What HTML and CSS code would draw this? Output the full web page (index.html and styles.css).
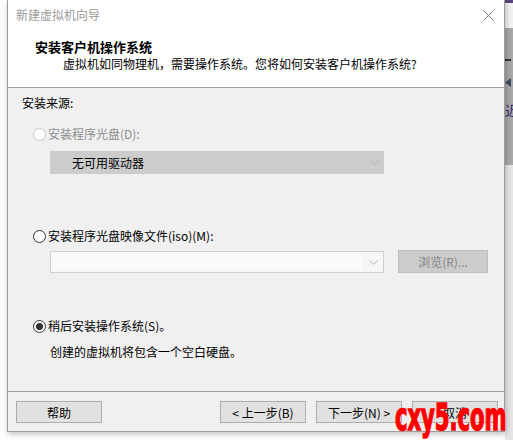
FILE: index.html
```html
<!DOCTYPE html>
<html lang="zh-CN">
  <head>
    <meta charset="UTF-8" />
    <meta name="viewport" content="width=device-width, initial-scale=1.0" />
    <title>新建虚拟机向导</title>
    <link rel="stylesheet" href="styles.css">
  </head>
  <body>
    <div class="desk">
      <div class="window">
        <!-- Title bar -->
        <div class="titlebar">
          <span class="title">新建虚拟机向导</span>
          <svg class="close" width="11" height="11" viewBox="0 0 11 11">
            <path d="M0.5 0.5 L10.5 10.5 M10.5 0.5 L0.5 10.5" stroke="#7a7a7a" stroke-width="1" fill="none" />
          </svg>
        </div>

        <!-- Wizard header -->
        <div class="header">
          <div class="header-title">安装客户机操作系统</div>
          <div class="header-sub">虚拟机如同物理机，需要操作系统。您将如何安装客户机操作系统?</div>
        </div>

        <!-- Install source -->
        <div class="content">
          <div class="group-label">安装来源:</div>

          <div class="option option-disc disabled">
            <span class="radio"></span>安装程序光盘(D):
          </div>
          <div class="select">
            <span>无可用驱动器</span>
            <svg class="chevron" width="9" height="5" viewBox="0 0 9 5">
              <polyline points="0.5,0.5 4.5,4.5 8.5,0.5" stroke="#b4b4b4" fill="none" />
            </svg>
          </div>

          <div class="option option-iso">
            <span class="radio"></span>安装程序光盘映像文件(iso)(M):
          </div>
          <div class="iso-row">
            <div class="combo">
              <div class="combo-field"></div>
              <svg class="chevron" width="9" height="5" viewBox="0 0 9 5">
                <polyline points="0.5,0.5 4.5,4.5 8.5,0.5" stroke="#b4b4b4" fill="none" />
              </svg>
            </div>
            <button class="browse">浏览(R)...</button>
          </div>

          <div class="option option-later">
            <span class="radio checked"></span>稍后安装操作系统(S)。
          </div>
          <p class="note">创建的虚拟机将包含一个空白硬盘。</p>
        </div>

        <!-- Buttons -->
        <div class="footer">
          <button class="btn">帮助</button>
          <div class="nav">
            <button class="btn">&lt; 上一步(B)</button>
            <button class="btn">下一步(N) &gt;</button>
            <button class="btn">取消</button>
          </div>
        </div>
      </div>

      <div class="backdrop">
        <span class="backdrop-top"></span>
        <span class="backdrop-mid">
          <span class="dash"></span>
          <span class="arrow"></span>
          <span class="glyph">近</span>
        </span>
      </div>
    </div>

    <div class="watermark">cxy5.com</div>
  </body>
</html>
```

FILE: styles.css
```css
body {
  margin: 0;
  padding: 0;
  font-family: "Noto Sans CJK SC", "Liberation Sans", sans-serif;
  font-size: 12px;
  color: #000;
  background: #fff;
  overflow: hidden;
}
.desk {
  display: flex;
  width: 513px;
  height: 440px;
  padding-left: 7px;
  box-sizing: border-box;
}
.window {
  width: 498px;
  height: 432px;
  box-sizing: border-box;
  border: 1px solid #9c9c9c;
  border-top: none;
  background: #fff;
  display: flex;
  flex-direction: column;
  box-shadow: 1px 2px 6px rgba(0, 0, 0, 0.25);
  position: relative;
  z-index: 1;
}
.titlebar {
  height: 30px;
  display: flex;
  align-items: center;
  justify-content: space-between;
  padding: 0 10px 0 8px;
}
.title {
  color: #9a9a9a;
  line-height: 16px;
}
.close {
  display: block;
}
.header {
  height: 58px;
  box-sizing: border-box;
  padding-top: 9px;
  border-bottom: 1px solid #a0a0a0;
}
.header-title {
  font-size: 13px;
  font-weight: bold;
  line-height: 16px;
  padding-left: 27px;
}
.header-sub {
  line-height: 18px;
  padding-left: 55px;
}
.content {
  height: 304px;
  box-sizing: border-box;
  background: #f0f0f0;
  padding: 7px 0 0 14px;
  border-bottom: 1px solid #a0a0a0;
}
.group-label {
  line-height: 16px;
}
.option {
  display: flex;
  align-items: center;
  line-height: 16px;
  margin-left: 11px;
}
.option.disabled {
  color: #8d8d8d;
}
.option-disc {
  margin-top: 15px;
}
.option-iso {
  margin-top: 54px;
}
.option-later {
  margin-top: 45px;
}
.radio {
  width: 13px;
  height: 13px;
  box-sizing: border-box;
  border: 1px solid #333;
  border-radius: 50%;
  background: #fff;
  margin-right: 2px;
  display: flex;
  align-items: center;
  justify-content: center;
}
.disabled .radio {
  border-color: #c4c4c4;
}
.radio.checked::after {
  content: "";
  width: 7px;
  height: 7px;
  border-radius: 50%;
  background: #333;
}
.select {
  margin: 9px 0 0 28px;
  width: 334px;
  height: 23px;
  box-sizing: border-box;
  background: #cccccc;
  display: flex;
  align-items: center;
  justify-content: space-between;
  padding: 0 5px 0 22px;
  line-height: 16px;
}
.iso-row {
  margin: 6px 0 0 28px;
  display: flex;
  align-items: flex-start;
  gap: 14px;
}
.combo {
  margin-top: 1px;
  width: 334px;
  height: 22px;
  box-sizing: border-box;
  border: 1px solid #cfcfcf;
  background: #f6f6f6;
  display: flex;
  align-items: center;
  padding: 2px 5px 2px 2px;
  gap: 7px;
}
.combo-field {
  flex: 1;
  height: 16px;
  background: #fafafa;
}
.chevron {
  display: block;
}
.browse {
  width: 90px;
  height: 23px;
  box-sizing: border-box;
  border: 1px solid #bfbfbf;
  background: #cccccc;
  color: #838383;
  font-family: inherit;
  font-size: 12px;
  padding: 0;
}
.note {
  margin: 10px 0 0 28px;
  line-height: 16px;
}
.footer {
  flex: 1;
  background: #f0f0f0;
  display: flex;
  justify-content: space-between;
  padding: 9px 6px 0 8px;
}
.nav {
  display: flex;
  gap: 10px;
}
.btn {
  width: 86px;
  height: 22px;
  box-sizing: border-box;
  border: 1px solid #adadad;
  background: #e1e1e1;
  font-family: inherit;
  font-size: 12px;
  color: #000;
  padding: 0;
}
.backdrop {
  flex: 1;
  display: flex;
  flex-direction: column;
  background: #e6e6e6;
  overflow: hidden;
}
.backdrop-top {
  height: 28px;
  background: #f2f2f2;
  border-top: 3px solid #5a4a7a;
  box-sizing: border-box;
}
.backdrop-mid {
  height: 137px;
  background: #a9a9a9;
  position: relative;
  overflow: hidden;
}
.dash {
  display: block;
  margin-top: 31px;
  width: 6px;
  height: 2px;
  background: #333;
}
.arrow {
  display: block;
  margin-top: 17px;
  width: 6px;
  height: 9px;
  background: #3c4a5c;
  clip-path: polygon(100% 0, 0 50%, 100% 100%);
}
.glyph {
  display: block;
  margin-top: 15px;
  font-size: 14px;
  line-height: 16px;
  color: #3a2a6a;
}
.watermark {
  position: absolute;
  left: 395px;
  top: 399px;
  z-index: 2;
  font-family: "DejaVu Sans", sans-serif;
  font-weight: bold;
  font-size: 37px;
  line-height: 37px;
  color: #ff0000;
  -webkit-text-stroke: 1.5px #ff0000;
  transform: scaleX(0.57);
  transform-origin: left top;
  white-space: nowrap;
}
```
